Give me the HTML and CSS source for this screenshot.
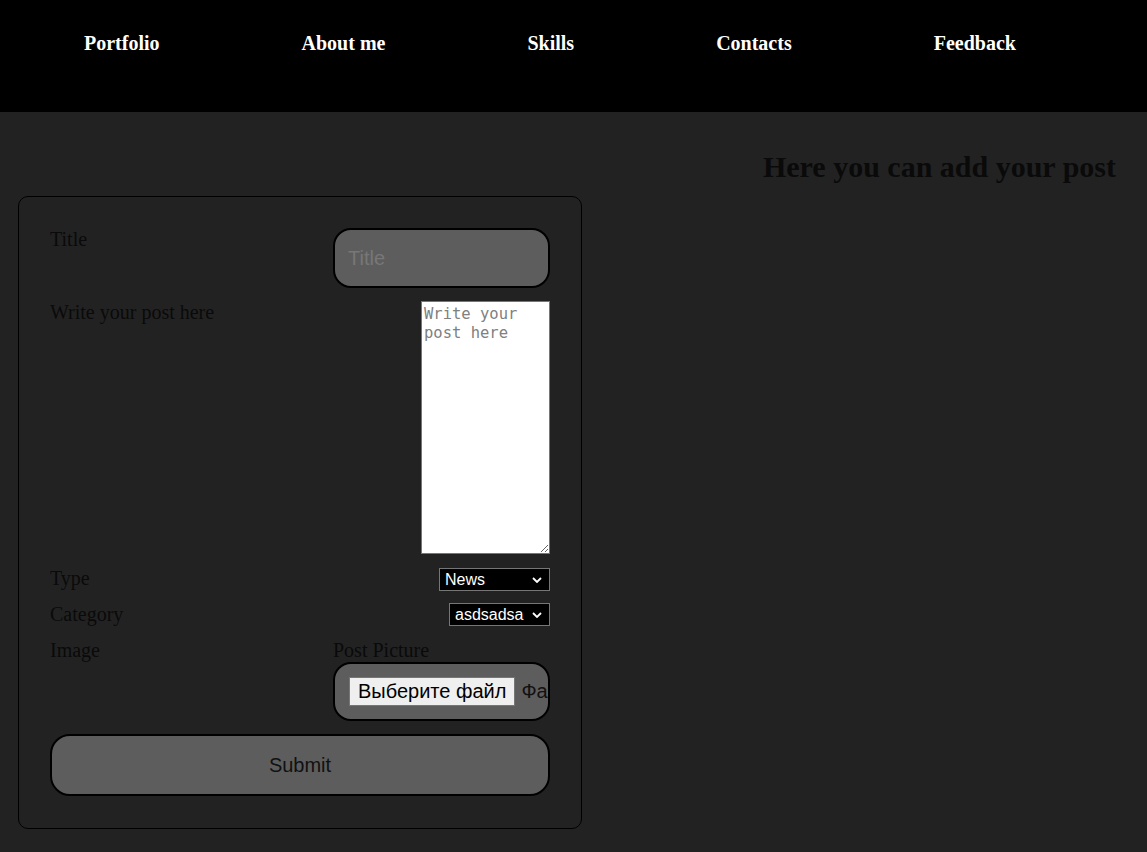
FILE: index.html
```html
<!DOCTYPE html>
<html lang="en">
<head>
<meta charset="utf-8">
<title>Add post</title>
<link rel="stylesheet" href="styles.css">
</head>
<body>
<header class="site-header">
  <nav class="nav">
    <a class="nav-link" href="#">Portfolio</a>
    <a class="nav-link" href="#">About me</a>
    <a class="nav-link" href="#">Skills</a>
    <a class="nav-link" href="#">Contacts</a>
    <a class="nav-link" href="#">Feedback</a>
  </nav>
</header>
<main class="page">
  <h2 class="page-title">Here you can add your post</h2>
  <form class="post-form">
    <div class="row">
      <label class="label">Title</label>
      <input class="pill-input" type="text" placeholder="Title">
    </div>
    <div class="row">
      <label class="label">Write your post here</label>
      <textarea class="post-text" placeholder="Write your post here"></textarea>
    </div>
    <div class="row">
      <label class="label">Type</label>
      <div class="select select-type"><span>News</span>
        <svg class="chev" width="10" height="6" viewBox="0 0 10 6"><path d="M1 1 L5 5 L9 1" fill="none" stroke="#fff" stroke-width="1.8"/></svg>
      </div>
    </div>
    <div class="row">
      <label class="label">Category</label>
      <div class="select select-cat"><span>asdsadsa</span>
        <svg class="chev" width="10" height="6" viewBox="0 0 10 6"><path d="M1 1 L5 5 L9 1" fill="none" stroke="#fff" stroke-width="1.8"/></svg>
      </div>
    </div>
    <div class="row">
      <label class="label">Image</label>
      <div class="image-col">
        <span class="label">Post Picture</span>
        <div class="file-box">
          <span class="file-btn">Выберите файл</span>
          <span class="file-name">Файл не выбран</span>
        </div>
      </div>
    </div>
    <button class="submit" type="button">Submit</button>
  </form>
</main>
</body>
</html>
```
FILE: styles.css
```css
* { box-sizing: border-box; }

body {
  margin: 0;
  background: #222222;
  font-family: "Liberation Serif", "Times New Roman", serif;
  min-height: 852px;
}

.site-header {
  background: #000;
  height: 112px;
}

.nav {
  display: flex;
  gap: 142px;
  padding: 32px 0 0 84px;
}

.nav-link {
  color: #fff;
  text-decoration: none;
  font-weight: bold;
  font-size: 20px;
  line-height: 23px;
}

.page {
  padding: 38px 31px 0 18px;
}

.page-title {
  margin: 0 0 12px;
  text-align: right;
  font-size: 30px;
  line-height: 34px;
  font-weight: bold;
  color: #0a0a0a;
}

.post-form {
  width: 564px;
  border: 1px solid #000;
  border-radius: 10px;
  padding: 31px 31px 32px 31px;
  display: flex;
  flex-direction: column;
  gap: 13px;
}

.row {
  display: flex;
  justify-content: space-between;
  align-items: flex-start;
}

.label {
  font-size: 20px;
  line-height: 23px;
  color: #0a0a0a;
}

.pill-input {
  width: 217px;
  height: 60px;
  border: 2px solid #000;
  border-radius: 18px;
  background: #5d5d5d;
  padding: 0 13px;
  font-family: "Liberation Sans", Arial, sans-serif;
  font-size: 20px;
  color: #111;
  outline: none;
}
.pill-input::placeholder { color: #777; }

.post-text {
  width: 129px;
  height: 253px;
  margin: 0;
  border: 1px solid #767676;
  background: #fff;
  padding: 3px 2px 2px;
  font-family: "DejaVu Sans Mono", "Liberation Mono", monospace;
  font-size: 15.5px;
  line-height: 19px;
  resize: both;
}
.post-text::placeholder { color: #808080; }

.select {
  height: 23px;
  display: flex;
  align-items: center;
  justify-content: space-between;
  background: #000;
  border: 1px solid #767676;
  color: #fff;
  font-family: "Liberation Sans", Arial, sans-serif;
  font-size: 16px;
  padding: 0 7px 0 5px;
}
.select-type { width: 111px; margin: 1px 0 -1px; }
.select-cat { width: 101px; }
.chev { display: block; }

.image-col {
  width: 217px;
  display: flex;
  flex-direction: column;
}

.file-box {
  height: 59px;
  border: 2px solid #000;
  border-radius: 18px;
  background: #5d5d5d;
  padding-left: 14px;
  display: flex;
  align-items: center;
  overflow: hidden;
  white-space: nowrap;
  font-family: "Liberation Sans", Arial, sans-serif;
  font-size: 20px;
}

.file-btn {
  flex: none;
  background: #efefef;
  border: 1px solid #767676;
  padding: 2px 8px;
  line-height: 23px;
  color: #000;
}

.file-name {
  margin-left: 6px;
  color: #111;
}

.submit {
  width: 100%;
  height: 62px;
  border: 2px solid #000;
  border-radius: 20px;
  background: #5d5d5d;
  font-family: "Liberation Sans", Arial, sans-serif;
  font-size: 20px;
  color: #111;
  padding: 0;
}
```
